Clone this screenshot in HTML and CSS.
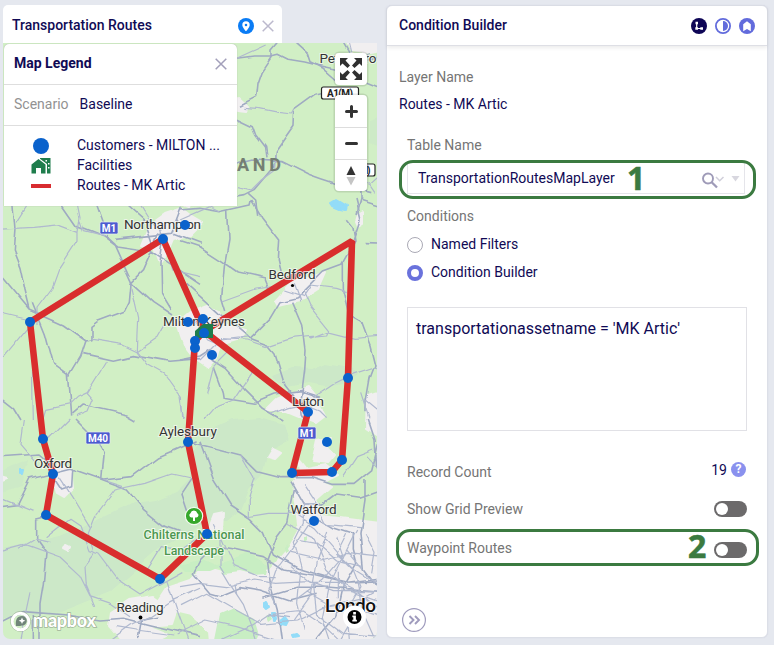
FILE: index.html
```html
<!DOCTYPE html>
<html lang="en">
<head>
<meta charset="utf-8">
<title>Transportation Routes</title>
<link rel="stylesheet" href="styles.css">
</head>
<body>
<main class="workspace">
  <section class="map-panel">
    <header class="tab">
      <h2 class="title">Transportation Routes</h2>
      <svg class="tab-pin" width="16" height="16" viewBox="0 0 16 16"><circle cx="8" cy="8" r="8" fill="#0a7cf5"/><path fill="#fff" fill-rule="evenodd" d="M8 3.200a3.700 3.700 0 0 0-3.700 3.700C4.300 9.200 8 13.200 8 13.200s3.700-4 3.700-6.300A3.700 3.700 0 0 0 8 3.200zm0 2.500a1.300 1.300 0 1 1 0 2.600 1.300 1.300 0 0 1 0-2.600z"/></svg>
      <svg width="12" height="12" viewBox="0 0 12 12"><path d="M.7.7l10.600 10.600M11.300.7L.7 11.300" stroke="#bcb9cd" stroke-width="1.500"/></svg>
    </header>
    <div class="map">
      <svg class="map-canvas" width="374" height="596" viewBox="3 43 374 596">
        <defs>
          <filter id="meander" filterUnits="userSpaceOnUse" x="-20" y="20" width="420" height="640">
            <feTurbulence type="fractalNoise" baseFrequency=".035" numOctaves="1" seed="4"/>
            <feDisplacementMap in="SourceGraphic" scale="9" xChannelSelector="R" yChannelSelector="G"/>
            <feGaussianBlur stdDeviation=".45"/>
          </filter>
        </defs>
        <rect x="3" y="43" width="374" height="596" fill="#d1efc5"/>
        <g filter="url(#meander)">
        <!-- woodland -->
        <g fill="#cce8c8">
          <path d="M-5 550L30 542 60 535 92 522 120 508 135 503 155 500 175 491 188 478 192 455 205 432 232 420 260 418 285 425 290 440 268 452 262 475 248 490 240 510 228 520 205 520 185 535 160 548 135 570 110 592 85 602 60 612 -5 620z"/>
          <path d="M272 376l20-8 20 1 14-6 24 4 8 9-10 7-22 4-18-3-22 4-10-6z"/>
          <path d="M369 120l15-5v32l-15-4zM-5 476l34-15-6 26-28 8z" opacity=".7"/>
        </g>
        <!-- built-up areas -->
        <g class="urban">
          <path d="M143 245l8-20 14-10 18-6 8 6 12 7-14 14-15 3-6 14-8 11-6-16z"/>
          <path d="M190 207l-10-4 3-5 6-4 5 4z"/>
          <path d="M182 335l-4-12 14-12 16-6 12 6 6 16 20 4-6 8-20 6-3 12-9 10-12-8-10-13z"/>
          <path d="M275 300l10-11 11-12 14 1 16-6-8 18-14 9-18 4-8 2z"/>
          <path d="M268 410l10-10 16-7 14-5 8 10 9 17-9 7-18-7-12-5z"/>
          <path d="M53 480l4-18 14 7 2 19-10 10-7-4z"/>
          <path d="M111 612l18-12 25-4 22 16-4 12-25 2 20 8-10 5-36 0-12-14z"/>
          <path d="M292 482l8-10-2-12 8 10 20-4 12 9-16 8 10 4-16 14 8 14 55 7v130H212l-2-20-18-16-38-9 13-20 24-8 12-12 24 6 22 0 22-4 18-20 10-18z"/>
          <path d="M344 38l28 0 12 11-19 4-14-2zM368 395l16-5v50l-17-12zM358 215l5-3 0 11-5 3-2-5zM238 97l10 9-2 4-8-1zM214 515l10-2-1 15-14 0zM318 440l14-3-4 11 8 8-7 8-16-2zM272 449l8 4-6 6-7-2z"/>
          <path d="M65 545l4 2-2 4-4-2zM-3 477l10 3-10 4z"/>
        </g>
        <g fill="#c8eec3">
          <path d="M216 565l20-6 12-6 20 12-2 9-14 1-12-3-16 2zM180 565l22-6 18 8-10 4-24 0zM221 615l14-6 19 10 5 16-4 10h-40z"/>
          <path d="M284 549l4-4-1 5 2 3-4 1zM305 537l3-2 0 5-3 2zM266 615l4-2 2 4-4 3z"/>
        </g>
        <g class="water">
          <path d="M332 203l5-3 5 3 5 3-1 4-5-1-7-3zM265 603l3-1 2 4-3 2-2-2zM273 612l3 0 1 6-3 1zM282 619l3-2 3 4-2 4-5-1zM291 636l4-1 2 2-5 1zM22 472l3 0-1 4-2 0z"/>
        </g>
        <!-- road network, one group per map tile -->
        <g class="roads" transform="translate(200 0) scale(.3333)">
          <path d="M90 178l74-10 50 0 20-5 30 15 50 8 40 10 70 15"/>
          <path d="M250 110l-34 40 0 20-30 45-12 35-4 40-50 26M270 110l50 45 10 30 40 20 40 35 60 10M370 278l-20 5-66 48-2 48-56 80-4 40-60 70-30 15-78 14M104 353l50 24 10 28 30 40 4 30M110 492l50-12 84 5 80 40 40 14 60 20 90 22M480 575l0 25 70 22M480 600l-12 45M420 115l50 85 80-38M500 250l50 20M145 580l22 20 6 45"/>
          <path class="minor" d="M133 322l40 3 60 12 44 5 8-12M114 560l40 10 30-30 40-30 2-40M100 181l100-46M440 110l20 80 50-30M506 560l44-40M500 545l24 35"/>
        </g>
        <g class="roads" transform="translate(0 200) scale(.3333)">
          <path d="M38 0l7 85-5 65 20 50 15 70 15 60M-10 210l100 120 100 45 68 48 15-4 0-40 20-15 80-30 15-30 5-54 35-35 50-115M180 0l54 78 76 30 40 30 100 15 30 20 120 80M280 0l40 110 22 20 54 120 60 55 60 40M100 310l36 90 24 90 42 30 10 130M206 530l36-60 16-48M250 458l90 20 60-14 110 20 90-8M-10 586l48 38 22 36M215 645l35-30 130 30 26 15"/>
          <path d="M490 120l-10 70 2 90 30 50M360 0l80 70 20 60M545 20l-30 80-90 10-80 8M520 100l80 30"/>
          <path class="minor" d="M-10 88l110-6 80-8 54 20 0 30-55 85-20 55-45 60 0 45M234 94l6-44-10-50M92 0L50 65M-10 336l100 24M90 375L-10 495M95 390l5 270M396 264l20 90-4 100 32 40 50 28 50 70 4 68M274 415l90 15 50 24 60-42 20-35M322 480l-60 98-30 14-22 22-70 14-10 32M262 578l18 20-16 38-36 14M240 62l10 30 60 15M420 20l25 40 40 30 30 120 85 20"/>
        </g>
        <g class="roads" transform="translate(180 200) scale(.3333)">
          <path d="M0 30l60-5 60 10 90-20 4-15M0 122l60 20 65 42 50 35 80 18 12 30M215 0l30 50 54 70-4 60 10 40M143 30l4 90-14 80-8 90 12 40M20 250l100 90 90 75 55 20 20 24 30 100 40 50 13 41M210 415l60-60 30-50 50-12 40-40 40-40 55-20 40-70-6-40-20-25M490 185l0 80 20 80 34 20 26 70 15 60-15 40-12 70 0 35M335 305l30 70 10 80-4 60-10 80 20 65M95 480l40 25 55 60 60 60 60 35M100 500l26 70 4 25 95 15 60-25 75-10 60 20M0 480l60-12 30-20M556 125l60 2M525 0l15 60-20 60"/>
          <path class="minor" d="M0 60l90-40 30 15M128 300l100-36 60-8M370 275l20 45 56 70-6 15-105 10-75 25-60-20-80-4M390 255l80 10 30 10M390 415l50-20 80 20 90-7M72 658l30-35 56-22 60-90M360 640l45-50 60-40 40-20 105-35M555 600l60 50M545 580l25 78M275 640l50-20 45-10 50 20 20 20M40 360l40 60 70 30-50 50-20 80M60 480l60-60 90-10M310 270l60 20 20-30M340 250l20 55M0 590l10 68"/>
        </g>
        <g class="roads" transform="translate(0 420) scale(.3333)">
          <path d="M-10 111l130-9 35 30M225 0l60 60 25 40-8 80 80 30 50 60 65 52 80 30M-10 262l60-8 40-80 60-14 60-15 100 35 90-10 80-60 110-48M150 290l-40 10 0 60 28 40-8 90-10 60 0 130M-10 615l80-40 130 10 100 15 70-5 80 20 150 35M100 680l0-95M218 150l-3 50-30 10-20-30M600 300l-40-20-20-60 40-60M415 655l10-60 50-10"/>
          <path class="minor" d="M70 0L60 70l60 70M205 0l-60 60M140 350l70-55 30 20 30 80 30 10 60 80 60 40 130-70M-10 395l80-21 110 40 60 56 30 60 60 20 60 40M150 365l-40-10-50 30M310 180l60 20M285 290l60-80 90-20 80-28 70 15M285 290l-20 50 20 60-30 40 4 60 25 60M175 170l40 60 55 90M-10 230l110 45M55 680l35-163M300 680l90-65 60-30 60-40 90-40M440 460l50-80 50 10 60-40M350 620l60 10 110 15M500 480l30 90 40 110"/>
        </g>
        <g class="roads" transform="translate(180 420) scale(.3333)">
          <path d="M25 65l80 20 80 20 50 50 70 18 90 0 60 20 70 0 50-40 20-80 35-80M60 65l40 110 50 80 60 40 40 40 30 70 70 40 90 25 50 20 130-5M610 210l-70 25-70-10-40 30-60 0-40-70M565 0l20 60 5 80M610 476l-110 14-100-25-90-15-60-40-90-20-60-10-40 40-20 40 50 60 30 8 60-25 60 10 90 30 80-20M250 535l100-30 100 0 160 13M310 680l-15-113-20-70-10-80 25-70 30-40 20-100M410 290l50 30 60 20 0 50 10 40-40 70-20 90-60 70-10 30M555 180l0 60-15 100 10 110 60 80"/>
          <path class="minor" d="M185 105l40 70-20 60 0 55 60-10 80 0 60 40 70 80 50 50 80 50M100 310l20 40 0 90 30 50 40 60 30 80 20 60M0 500l60-10 80 10 80-20 70 10 90-5 80 30 150 0M0 560l80-40 70 40 90 50 110-10 80-40 60-10 110 40M350 360l60 10 60 50 80 20M390 310l-40 60-60 80-20 60 20 40M370 250l0 60-30 60 20 70-10 110 20 80M440 330l-30 90-20 110-50 70M470 350l20 60-40 80-20 100 30 90M330 400l90 20 80-20 110 12M330 440l60 50 90 0 60 30 70 60M500 340l-30 60 50 50 20 50-40 70 10 110M400 490l10 90 80 60 120 10M120 350l40 90 70 30 60 0M370 190l40 60 30 60 100 10M-10 645l90-45 90 20 120 38M530 480l20 100 40 90M280 580l90-10 60 40 70 67M560 110l50 50M490 170l40-60 50-20"/>
          <path class="minor" d="M320 310l80 40 40 100 60 60 110 40M350 540l80-60 60-70 40-80M380 515l70 40 90-20M500 390l50 60M470 580l140-80M540 560l-70 117M330 590l-60-10-60 40-80 37M475 455l0 80M555 340l30 60-10 60M165 490l5 30"/>
        </g>
        </g>
        <!-- routes -->
        <g class="route">
          <path d="M204 331L163 239 30 322 43 439 53 474 46 515 160 579 207 534 188 442 195 341 204 331"/>
          <path d="M204 331L352 241 348 378 342 460 332 472 292 473 308 412 204 331"/>
        </g>
        <!-- road shields -->
        <g class="shield">
          <rect x="100" y="222" width="18" height="12" rx="1.500"/><text x="109" y="231.500">M1</text>
          <rect x="86" y="432" width="24" height="12" rx="1.500"/><text x="98" y="441.500">M40</text>
          <rect x="298" y="427" width="18" height="12" rx="1.500"/><text x="307" y="436.500">M1</text>
        </g>
        <g class="shield-light">
          <rect x="321.500" y="87" width="37" height="12" rx="2"/><text x="340" y="96.500" textLength="26">A1(M)</text>
          <rect x="355" y="164" width="20" height="12" rx="2"/><text x="365" y="173.500" textLength="11">M)</text>
        </g>
        <!-- place names -->
        <g class="place">
          <text x="162.500" y="229" textLength="77">Northampton</text>
          <text x="204" y="326" textLength="82">Milton Keynes</text>
          <text x="292" y="279" textLength="47">Bedford</text>
          <text x="308" y="405.500" textLength="32">Luton</text>
          <text x="188" y="436" textLength="58">Aylesbury</text>
          <text x="53" y="467.500" textLength="38">Oxford</text>
          <text x="313.500" y="514" textLength="46">Watford</text>
          <text x="140" y="611.500" textLength="47">Reading</text>
          <text x="348" y="63" textLength="57">Peterboro</text>
        </g>
        <circle cx="292.500" cy="285.500" r="1.600"/><circle cx="140.500" cy="617.500" r="1.900"/>
        <text class="region" x="237" y="170.500" textLength="44">AND</text>
        <text class="capital" x="325" y="612" textLength="51">Londo</text>
        <g class="park"><text x="194" y="539" textLength="101">Chilterns National</text><text x="194" y="554.500" textLength="60">Landscape</text></g>
        <path fill="#1f7d4c" d="M195 331l8-7h10v14h-18z"/>
        <g fill="#0a62cc">
          <circle cx="163" cy="239" r="5"/><circle cx="185" cy="225" r="5"/><circle cx="30" cy="322" r="5"/><circle cx="188" cy="322" r="5"/><circle cx="203" cy="319" r="5"/><circle cx="204" cy="333" r="5"/><circle cx="195" cy="341" r="5"/><circle cx="195" cy="348" r="5"/><circle cx="212" cy="355" r="5"/><circle cx="348" cy="378" r="5"/><circle cx="308" cy="412" r="5"/><circle cx="327" cy="442" r="5"/><circle cx="342" cy="460" r="5"/><circle cx="332" cy="472" r="5"/><circle cx="292" cy="473" r="5"/><circle cx="314" cy="521" r="5"/><circle cx="43" cy="439" r="5"/><circle cx="53" cy="474" r="5"/><circle cx="46" cy="515" r="5"/><circle cx="160" cy="579" r="5"/><circle cx="207" cy="534" r="5"/><circle cx="188" cy="442" r="5"/>
        </g>
        <circle cx="194" cy="516" r="8.700" fill="#35a82b" stroke="#f2faee" stroke-width="1.200"/>
        <path fill="#fff" d="M193 521v-3.500h-1.500a2.300 2.300 0 0 1-1-4.300 3.500 3.500 0 0 1 6.800 0 2.300 2.300 0 0 1-1 4.300H195v3.500z"/>
        <!-- attribution -->
        <circle cx="20.500" cy="621.500" r="8.600" fill="none" stroke="#81917e" stroke-opacity=".55" stroke-width="3.600"/>
        <circle cx="20.500" cy="621.500" r="8.300" fill="none" stroke="#fff" stroke-width="3"/>
        <path fill="#71857a" d="M16 626c-1-6 1-10 6-10a4.800 4.800 0 0 1 0 9.600c-2 .6-4 .6-6 .4z"/><path fill="#fff" d="M22 617.500l1 2.300 2.300 1-2.300 1-1 2.300-1-2.300-2.300-1 2.300-1z"/>
        <text class="brand" x="33" y="627" textLength="63">mapbox</text>
        <circle cx="354.500" cy="617" r="11.500" fill="#fff"/><circle cx="354.500" cy="617" r="7" fill="#000"/><path fill="#fff" d="M353.200 612h2.700v2.400h-2.700zM352.300 615.500h3.600v4.200h1v1.700h-4.600v-1.700h1v-2.500h-1z"/>
      </svg>
      <div class="map-controls">
        <div class="control"><svg width="24" height="24" viewBox="0 0 24 24" fill="#303030"><path d="M1 1h8L6.500 3.500 11 8.500 8.500 11 3.500 6.500 1 9zM23 1v8l-2.500-2.500L15.500 11 13 8.500 17.500 3.500 15 1zM1 23v-8l2.500 2.500L8.500 13l2.500 2.500-4.500 5L9 23zM23 23h-8l2.500-2.500-4.500-5 2.500-2.500 5 4.500L23 15z"/></svg></div>
        <div class="control stack">
          <span><svg width="13" height="13" viewBox="0 0 13 13"><path d="M6.500 1.500v10M1.500 6.500h10" stroke="#333" stroke-width="3" stroke-linecap="round"/></svg></span>
          <span><svg width="13" height="13" viewBox="0 0 13 13"><path d="M1.500 6.500h10" stroke="#333" stroke-width="3" stroke-linecap="round"/></svg></span>
          <span><svg width="10" height="20" viewBox="0 0 10 20"><path fill="#333" d="M5 0l4.500 9h-9z"/><path fill="#c5c5c5" d="M5 19.500l4.500-8.500h-9z"/></svg></span>
        </div>
      </div>
      <aside class="legend">
        <div class="legend-head"><h3>Map Legend</h3><svg width="12" height="12" viewBox="0 0 12 12"><path d="M.7.7l10.600 10.600M11.300.7L.7 11.300" stroke="#a29fba" stroke-width="1.500"/></svg></div>
        <div class="legend-scenario"><span class="muted">Scenario</span><span>Baseline</span></div>
        <ul class="legend-list">
          <li><svg width="20" height="20" viewBox="0 0 20 20"><circle cx="10" cy="11" r="8" fill="#0a62cc"/></svg>Customers - MILTON ...</li>
          <li><svg width="20" height="20" viewBox="0 0 20 20"><path fill="#1f7d4c" fill-rule="evenodd" d="M.5 9.500L7.500 4l7 5.500V18.500h-4.500v-5.500h-5v5.500H.5zM9 3h10.500v15.500H16V9L9 3.800zM14.500 5v1.500H16V5zm2.500 3v1.500h1.500V8zm0 4v1.500h1.500V12z"/></svg>Facilities</li>
          <li><svg width="20" height="20" viewBox="0 0 20 20"><path fill="#d82c30" d="M0 9h20v4H0z"/></svg>Routes - MK Artic</li>
        </ul>
      </aside>
    </div>
  </section>

  <section class="builder">
    <header class="builder-head">
      <h2 class="title">Condition Builder</h2>
      <svg width="16" height="16" viewBox="0 0 16 16"><circle cx="8" cy="8" r="8" fill="#0e0656"/><path d="M5.700 5v5.500H11" fill="none" stroke="#fff" stroke-width="1.200"/><path fill="#fff" d="M4.500 3.800H7v2.400H4.500zM4.300 9.300H7v2.400H4.300zM9.300 9.200H12v2.600H9.300z"/></svg>
      <svg width="16" height="16" viewBox="0 0 16 16"><circle cx="8" cy="8" r="7.100" fill="#fff" stroke="#626bdc" stroke-width="1.800"/><path fill="#626bdc" d="M8 3a5 5 0 0 1 0 10z"/></svg>
      <svg width="16" height="16" viewBox="0 0 16 16"><circle cx="8" cy="8" r="8" fill="#626bdc"/><path fill="#fff" d="M8 3.200l3.800 3V13.200L8 11l-3.800 2.200V6.200z"/></svg>
    </header>
    <div class="builder-body">
      <div class="layer"><p class="muted">Layer Name</p><p>Routes - MK Artic</p></div>
      <div class="form">
        <p class="muted">Table Name</p>
        <div class="select">
          <span>TransportationRoutesMapLayer</span>
          <svg width="40" height="18" viewBox="0 0 40 18" fill="none"><circle cx="7" cy="7.500" r="5" stroke="#9f9bb8" stroke-width="1.900"/><path d="M10.700 11.200l5.300 5.300" stroke="#9f9bb8" stroke-width="2.300"/><path d="M15 6l3.700 3.700L22.500 6" stroke="#d0cfda" stroke-width="1.500"/><path fill="#d8d7df" d="M30.500 5h8L34.500 10.500z"/></svg>
          <span class="callout callout-one">1</span>
        </div>
        <p class="muted conditions">Conditions</p>
        <div class="radio"><i class="dot"></i>Named Filters</div>
        <div class="radio"><i class="dot checked"></i>Condition Builder</div>
        <div class="expression">transportationassetname = 'MK Artic'</div>
        <div class="row record"><span class="muted">Record Count</span><span class="count">19 <i class="help">?</i></span></div>
        <div class="row preview"><span class="muted">Show Grid Preview</span><i class="toggle"></i></div>
        <div class="row waypoint"><span class="muted">Waypoint Routes</span><i class="toggle"></i><span class="callout callout-two">2</span></div>
      </div>
      <svg class="collapse" width="24" height="24" viewBox="0 0 24 24" fill="none" stroke="#9f9bbd"><circle cx="12" cy="12" r="11.400" stroke-width="1.200"/><path d="M7.500 8l4 4-4 4M13 8l4 4-4 4" stroke-width="1.900"/></svg>
    </div>
  </section>
</main>
</body>
</html>
```
FILE: styles.css
```css
* { box-sizing: border-box; }
body { margin: 0; background: #e5e8ef; color: #100a55; font: 14px/20px Roboto, sans-serif; overflow: hidden; }
h2, h3, p, ul { margin: 0; padding: 0; }
svg { display: block; flex: none; }
i { font-style: normal; }
.muted { color: #757575; }
.title { font-size: 14px; font-weight: 500; margin-right: auto; }
.workspace { display: grid; grid-template-columns: 374px 382px; gap: 9px; padding: 5px 6px 6px 3px; height: 645px; }

.tab { width: 279px; height: 38px; display: flex; align-items: center; padding: 3px 8px 0 9px; gap: 8px; background: #fff; border-radius: 5px 5px 0 0; }
.map { position: relative; height: 596px; }
.map-canvas { border-radius: 0 0 7px 7px; }
.map-panel .tab .title { position: relative; top: -1px; }

.roads path { fill: none; stroke: #9faac2; stroke-width: 4.800; stroke-linejoin: round; }
.roads .minor { stroke: #b0b9cf; stroke-width: 3.600; }
.urban { fill: #f1eff0; stroke: #f1eff0; stroke-width: 2; stroke-linejoin: round; }
.water { fill: #93dcf8; stroke: #93dcf8; stroke-width: 2; stroke-linejoin: round; }
.map-canvas text { font-family: Roboto, sans-serif; }
.place text { font-size: 13.500px; text-anchor: middle; fill: #333; stroke: rgba(245, 247, 243, .8); stroke-width: 2px; paint-order: stroke; }
.shield rect { fill: #4c5bd0; stroke: #e6edf1; stroke-width: .7; }
.shield text { fill: #fff; font-size: 10px; font-weight: 700; text-anchor: middle; }
.shield-light rect { fill: #fff; stroke: #222; stroke-width: 1.200; }
.shield-light text { fill: #222; font-size: 10px; font-weight: 700; text-anchor: middle; }
.region { font-size: 18px; font-weight: 700; fill: #747f73; }
.capital { font-size: 19px; font-weight: 500; fill: #111; stroke: #fff; stroke-width: 1.500px; paint-order: stroke; }
.park text { font-size: 12.500px; font-weight: 500; text-anchor: middle; fill: #4b9650; stroke: #eff9ea; stroke-width: 2px; paint-order: stroke; }
.route path { fill: none; stroke: #d92d2d; stroke-width: 6.600; stroke-linejoin: bevel; }
.map-canvas .brand { font-family: Lato, sans-serif; font-size: 18px; font-weight: 900; fill: #fff; stroke: #84947f; stroke-opacity: .65; stroke-width: 1.500px; paint-order: stroke; }

.map-controls { position: absolute; right: 10px; top: 10px; width: 32px; display: grid; gap: 10px; }
.control { background: #fff; border-radius: 4px; box-shadow: 0 0 0 1.500px rgba(0, 0, 0, .1); height: 32px; display: grid; place-items: center; }
.control.stack { height: 96px; grid-template-rows: repeat(3, 32px); place-items: stretch; }
.stack span { display: grid; place-items: center; }
.stack span + span { border-top: 1px solid #ddd; }

.legend { position: absolute; left: 1px; top: 1px; width: 233px; height: 162px; background: #fff; border-radius: 5px 5px 0 0; box-shadow: 0 0 1px #999; }
.legend-head { height: 41px; display: flex; align-items: center; justify-content: space-between; padding: 0 10px; border-bottom: 1px solid #dedede; }
.legend h3 { font-size: 14px; font-weight: 700; position: relative; top: -1px; }
.legend-scenario { height: 41px; display: flex; align-items: center; gap: 11px; padding: 0 10px 2px; border-bottom: 1px solid #dedede; }
.legend-scenario .muted { color: #929292; }
.legend-list { list-style: none; padding: 9px 0 0 27px; }
.legend-list li { display: flex; gap: 26px; height: 20px; }

.builder { background: #fff; border: 1px solid #dcdfe7; border-radius: 6px; box-shadow: 0 0 1px #ccd; display: flex; flex-direction: column; height: 633px; }
.builder-head { height: 40px; display: flex; align-items: center; gap: 8px; padding: 1px 12px 0; border-bottom: 1px solid #dedfe5; box-shadow: 0 2px 4px rgba(0, 0, 0, .08); }
.builder-head .title { position: relative; top: -1px; }
.builder-body { flex: 1; display: flex; flex-direction: column; padding: 21px 12px 5px; }
.layer { display: grid; gap: 7px; }
.form { margin: 21px 8px 0; width: 340px; }
.select { position: relative; height: 33px; width: 338px; margin-top: 6px; padding: 0 3px 0 10px; display: flex; align-items: center; justify-content: space-between; border: 1px solid #e5e5ea; }
.select svg { position: relative; top: 2px; }
.select::after, .waypoint::after { content: ""; position: absolute; border: 3px solid #3b7a40; border-radius: 14px; }
.select::after { inset: -2px -12px -6px -9px; }
.callout { position: absolute; color: #3b7a40; font: 700 32px/32px "Open Sans", sans-serif; -webkit-text-stroke: .6px #3b7a40; }
.callout-one { left: 219px; top: 0; }
.callout-two { left: 281px; top: -8px; }
.conditions { margin-top: 12px; }
.radio { display: flex; align-items: center; gap: 8px; height: 20px; margin-top: 8px; }
.dot { width: 16px; height: 16px; border: 1px solid #aaa9b5; border-radius: 50%; position: relative; top: 1px; }
.dot.checked { border: 4px solid #6a72dc; }
.expression { height: 124px; margin-top: 25px; border: 1px solid #e1e1e6; padding: 11px 8px; font-size: 16px; }
.row { position: relative; display: flex; align-items: center; justify-content: space-between; height: 20px; }
.record { margin-top: 31px; }
.preview { margin-top: 17px; }
.waypoint { margin-top: 19px; }
.waypoint::after { inset: -9px -12px -8px -11px; }
.waypoint .toggle { position: relative; top: 2px; }
.count { display: flex; align-items: center; gap: 4px; position: relative; top: -2px; left: -1px; }
.help { width: 15px; height: 15px; border-radius: 50%; background: #8a91ee; color: #fff; font: 700 12px/15px Roboto, sans-serif; text-align: center; position: relative; top: -1px; }
.toggle { width: 33px; height: 16px; border-radius: 8px; background: #6c6a6b; padding: 2px; }
.toggle::before { content: ""; display: block; width: 12px; height: 12px; border-radius: 50%; background: #fff; }
.collapse { margin: auto 0 0 3px; }
```
